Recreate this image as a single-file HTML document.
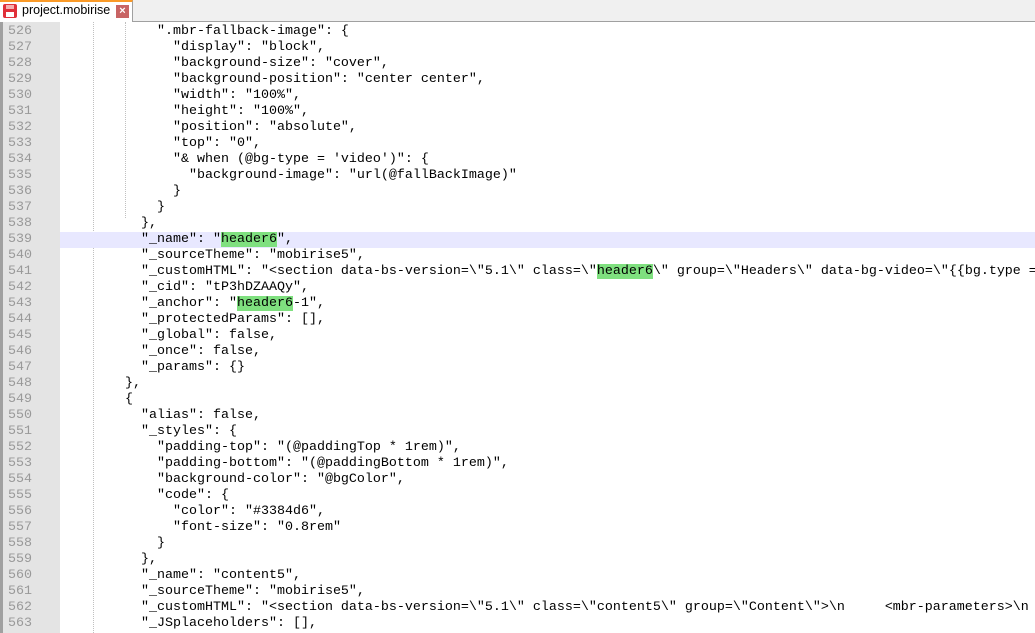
<!DOCTYPE html>
<html><head><style>
body{margin:0;width:1035px;height:633px;overflow:hidden;background:#fff;font-family:"Liberation Sans",sans-serif;position:relative}
.tabbar{position:absolute;left:0;top:0;width:1035px;height:22px;background:#f0f0f0;border-bottom:1px solid #a0a0a0;box-sizing:border-box}
.tab{position:absolute;left:0;top:0;width:133px;height:22px;background:#fff;border-top:2px solid #fa9a28;border-right:1px solid #a0a0a0;box-sizing:border-box}
.tab .t{position:absolute;left:22px;top:1px;font-size:12.5px;color:#000}
.ico{position:absolute;left:3px;top:2px;width:14px;height:14px;background:#e0303a;border-radius:2px}
.ico:after{content:"";position:absolute;left:3px;top:8px;width:8px;height:5px;background:#fff}
.ico:before{content:"";position:absolute;left:3px;top:1px;width:8px;height:4px;background:#f4b0b0}
.x{position:absolute;left:116px;top:3px;width:13px;height:13px;background:#c86464;color:#fff;font-size:11px;line-height:13px;text-align:center;font-weight:bold}
.ed{position:absolute;left:0;top:22px;width:1035px;height:611px;border-left:3px solid #a0a0a0;box-sizing:border-box}
.gut{position:absolute;left:3px;top:22px;width:57px;height:611px;background:#e4e4e4}
.lines{position:absolute;left:0;top:24px;width:1035px}
.l{height:16px;position:relative;font-family:"Liberation Mono",monospace;font-size:13.33px;line-height:16px;white-space:pre}
.l .n{position:absolute;left:8px;color:#999}
.l .c{position:absolute;left:61px;color:#000}
.cur{background:#e8e8ff}
.hl{background:#7fe07f}
.g{position:absolute;top:22px;height:611px;width:0;border-left:1px dotted #c0c0c0}
</style></head><body>
<div class="tabbar"><div class="tab"><div class="ico"></div><span class="t">project.mobirise</span><div class="x">×</div></div></div>
<div class="ed"></div>
<div class="gut"></div>
<div class="g" style="left:93px"></div>
<div class="g" style="left:125px;top:22px;height:196px"></div>
<div class="lines">
<div class="l"><span class="n">526</span><span class="c">            ".mbr-fallback-image": {</span></div>
<div class="l"><span class="n">527</span><span class="c">              "display": "block",</span></div>
<div class="l"><span class="n">528</span><span class="c">              "background-size": "cover",</span></div>
<div class="l"><span class="n">529</span><span class="c">              "background-position": "center center",</span></div>
<div class="l"><span class="n">530</span><span class="c">              "width": "100%",</span></div>
<div class="l"><span class="n">531</span><span class="c">              "height": "100%",</span></div>
<div class="l"><span class="n">532</span><span class="c">              "position": "absolute",</span></div>
<div class="l"><span class="n">533</span><span class="c">              "top": "0",</span></div>
<div class="l"><span class="n">534</span><span class="c">              "&amp; when (@bg-type = 'video')": {</span></div>
<div class="l"><span class="n">535</span><span class="c">                "background-image": "url(@fallBackImage)"</span></div>
<div class="l"><span class="n">536</span><span class="c">              }</span></div>
<div class="l"><span class="n">537</span><span class="c">            }</span></div>
<div class="l"><span class="n">538</span><span class="c">          },</span></div>
<div class="l cur" style="margin-left:60px"><span class="n" style="left:-52px">539</span><span class="c" style="left:1px">          "_name": "<span class="hl">header6</span>",</span></div>
<div class="l"><span class="n">540</span><span class="c">          "_sourceTheme": "mobirise5",</span></div>
<div class="l"><span class="n">541</span><span class="c">          "_customHTML": "&lt;section data-bs-version=\"5.1\" class=\"<span class="hl">header6</span>\" group=\"Headers\" data-bg-video=\"{{bg.type ==</span></div>
<div class="l"><span class="n">542</span><span class="c">          "_cid": "tP3hDZAAQy",</span></div>
<div class="l"><span class="n">543</span><span class="c">          "_anchor": "<span class="hl">header6</span>-1",</span></div>
<div class="l"><span class="n">544</span><span class="c">          "_protectedParams": [],</span></div>
<div class="l"><span class="n">545</span><span class="c">          "_global": false,</span></div>
<div class="l"><span class="n">546</span><span class="c">          "_once": false,</span></div>
<div class="l"><span class="n">547</span><span class="c">          "_params": {}</span></div>
<div class="l"><span class="n">548</span><span class="c">        },</span></div>
<div class="l"><span class="n">549</span><span class="c">        {</span></div>
<div class="l"><span class="n">550</span><span class="c">          "alias": false,</span></div>
<div class="l"><span class="n">551</span><span class="c">          "_styles": {</span></div>
<div class="l"><span class="n">552</span><span class="c">            "padding-top": "(@paddingTop * 1rem)",</span></div>
<div class="l"><span class="n">553</span><span class="c">            "padding-bottom": "(@paddingBottom * 1rem)",</span></div>
<div class="l"><span class="n">554</span><span class="c">            "background-color": "@bgColor",</span></div>
<div class="l"><span class="n">555</span><span class="c">            "code": {</span></div>
<div class="l"><span class="n">556</span><span class="c">              "color": "#3384d6",</span></div>
<div class="l"><span class="n">557</span><span class="c">              "font-size": "0.8rem"</span></div>
<div class="l"><span class="n">558</span><span class="c">            }</span></div>
<div class="l"><span class="n">559</span><span class="c">          },</span></div>
<div class="l"><span class="n">560</span><span class="c">          "_name": "content5",</span></div>
<div class="l"><span class="n">561</span><span class="c">          "_sourceTheme": "mobirise5",</span></div>
<div class="l"><span class="n">562</span><span class="c">          "_customHTML": "&lt;section data-bs-version=\"5.1\" class=\"content5\" group=\"Content\"&gt;\n     &lt;mbr-parameters&gt;\n</span></div>
<div class="l"><span class="n">563</span><span class="c">          "_JSplaceholders": [],</span></div>
</div>
</body></html>
